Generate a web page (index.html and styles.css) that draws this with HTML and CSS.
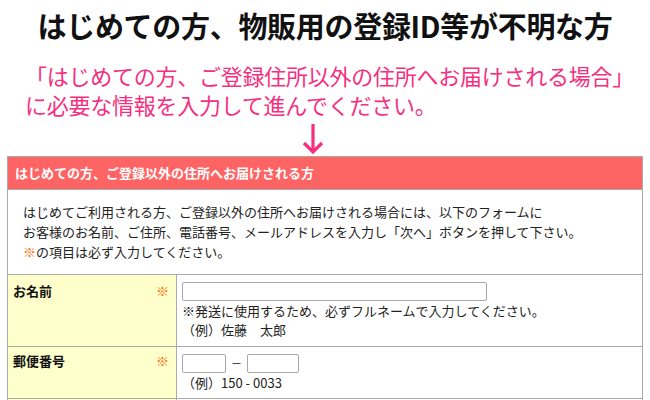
FILE: index.html
```html
<!DOCTYPE html>
<html lang="ja">
<head>
<meta charset="utf-8">
<link rel="stylesheet" href="styles.css">
</head>
<body>
<h1 class="title">はじめての方、物販用の登録ID等が不明な方</h1>
<div class="lead">
  <p>「はじめての方、ご登録住所以外の住所へお届けされる場合」</p>
  <p>に必要な情報を入力して進んでください。</p>
</div>
<div class="arrow">
  <svg width="24" height="32" viewBox="0 0 24 32"><path d="M12 1V29M3 20L12 29L21 20" fill="none" stroke="#f5307f" stroke-width="3.2"/></svg>
</div>
<div class="box">
  <div class="box-head">はじめての方、ご登録以外の住所へお届けされる方</div>
  <div class="box-desc">
    <p>はじめてご利用される方、ご登録以外の住所へお届けされる場合には、以下のフォームに</p>
    <p>お客様のお名前、ご住所、電話番号、メールアドレスを入力し「次へ」ボタンを押して下さい。</p>
    <p><span class="req">※</span>の項目は必ず入力してください。</p>
  </div>
  <div class="row row-name">
    <div class="label"><span>お名前</span><span class="req">※</span></div>
    <div class="field">
      <div class="input wide"></div>
      <p>※発送に使用するため、必ずフルネームで入力してください。</p>
      <p class="ex">（例）佐藤　太郎</p>
    </div>
  </div>
  <div class="row row-zip">
    <div class="label"><span>郵便番号</span><span class="req">※</span></div>
    <div class="field">
      <div class="zip"><div class="input z1"></div><span class="dash">－</span><div class="input z2"></div></div>
      <p class="ex">（例）150 - 0033</p>
    </div>
  </div>
  <div class="row row-next">
    <div class="label"></div>
    <div class="field"></div>
  </div>
</div>
</body>
</html>
```
FILE: styles.css
```css
body {
  margin: 0;
  width: 650px;
  height: 400px;
  overflow: hidden;
  background: #fff;
  font-family: "Noto Sans CJK JP", "Noto Sans", sans-serif;
  color: #222;
}
p { margin: 0; }
.title {
  margin: 0;
  padding-top: 5px;
  height: 44px;
  text-align: center;
  font-size: 29px;
  line-height: 40px;
  font-weight: 700;
  color: #111;
  letter-spacing: -0.3px;
}
.lead {
  margin-top: 12px;
  padding-left: 25px;
  color: #f5307f;
  font-size: 22px;
  line-height: 29px;
  letter-spacing: -0.25px;
}
.arrow {
  display: flex;
  padding-left: 301px;
  height: 33px;
  margin-top: 4px;
}
.box {
  margin: 0 7px;
  border: 1px solid #aaa;
  border-bottom: none;
}
.box-head {
  background: #ff6464;
  color: #fff;
  font-size: 13px;
  font-weight: 700;
  height: 32px;
  line-height: 32px;
  padding-left: 7px;
  border-bottom: 1px solid #aaa;
}
.box-desc {
  font-size: 13px;
  line-height: 20px;
  padding: 12px 15px 12px;
}
.req { color: #ff6a00; }
.row {
  display: grid;
  grid-template-columns: 169px 1fr;
  border-top: 1px solid #aaa;
  font-size: 13px;
}
.label {
  background: #ffffcc;
  border-right: 1px solid #aaa;
  display: flex;
  justify-content: space-between;
  padding: 6px 7px 0 5px;
  font-weight: 700;
  color: #111;
  line-height: 20px;
}
.label .req { font-weight: 400; }
.field {
  padding: 7px 5px 0;
  line-height: 19px;
}
.row-name { height: 71px; }
.row-zip { height: 51px; }
.row-next { height: 30px; }
.input {
  border: 1px solid #a8a8a8;
  border-radius: 2px;
  height: 17px;
  background: #fff;
}
.wide { width: 303px; }
.zip {
  display: flex;
  align-items: center;
  gap: 5px;
  height: 20px;
}
.z1 { width: 42px; }
.z2 { width: 50px; }
.dash { font-size: 11px; }
.row-zip .field { padding-top: 6px; }
.row-zip .label { padding-top: 4px; }
```
